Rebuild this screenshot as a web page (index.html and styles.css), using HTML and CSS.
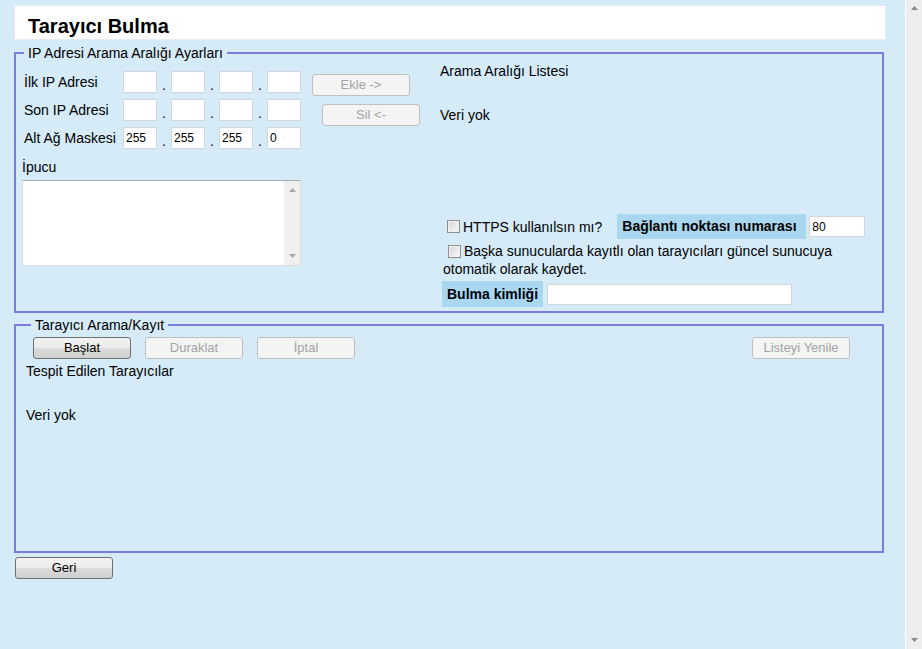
FILE: index.html
```html
<!DOCTYPE html>
<html lang="tr">
<head>
<meta charset="utf-8">
<title>Tarayıcı Bulma</title>
<link rel="stylesheet" href="styles.css">
</head>
<body>
<div class="page">
  <main class="main">
    <div class="header"><h1>Tarayıcı Bulma</h1></div>

    <fieldset class="box box-range">
      <legend>IP Adresi Arama Aralığı Ayarları</legend>
      <div class="range">
        <div class="col-left">
          <div class="ip-row">
            <span class="ip-label">İlk IP Adresi</span>
            <input class="oct" type="text"><span class="dot">.</span>
            <input class="oct" type="text"><span class="dot">.</span>
            <input class="oct" type="text"><span class="dot">.</span>
            <input class="oct" type="text">
          </div>
          <div class="ip-row">
            <span class="ip-label">Son IP Adresi</span>
            <input class="oct" type="text"><span class="dot">.</span>
            <input class="oct" type="text"><span class="dot">.</span>
            <input class="oct" type="text"><span class="dot">.</span>
            <input class="oct" type="text">
          </div>
          <div class="ip-row">
            <span class="ip-label">Alt Ağ Maskesi</span>
            <input class="oct" type="text" value="255"><span class="dot">.</span>
            <input class="oct" type="text" value="255"><span class="dot">.</span>
            <input class="oct" type="text" value="255"><span class="dot">.</span>
            <input class="oct" type="text" value="0">
          </div>
          <div class="hint-label">İpucu</div>
          <div class="hint-box">
            <textarea class="hint-text"></textarea>
            <div class="tsb">
              <svg width="7" height="4" viewBox="0 0 7 4"><path d="M0 4 L3.5 0 L7 4 Z" fill="#a8a8a8"/></svg>
              <svg width="7" height="4" viewBox="0 0 7 4"><path d="M0 0 L7 0 L3.5 4 Z" fill="#a8a8a8"/></svg>
            </div>
          </div>
        </div>

        <div class="col-mid">
          <button class="btn btn-ekle" disabled>Ekle -&gt;</button>
          <button class="btn btn-sil" disabled>Sil &lt;-</button>
        </div>

        <div class="col-right">
          <div class="list-title">Arama Aralığı Listesi</div>
          <div class="list-empty">Veri yok</div>
          <div class="opts">
            <div class="opt-row">
              <input type="checkbox" class="cb">
              <span>HTTPS kullanılsın mı?</span>
              <span class="tag tag-port">Bağlantı noktası numarası</span>
              <input class="port" type="text" value="80">
            </div>
            <p class="opt-p"><input type="checkbox" class="cb cb2">Başka sunucularda kayıtlı olan tarayıcıları güncel sunucuya otomatik olarak kaydet.</p>
            <div class="opt-row id-row">
              <span class="tag tag-id">Bulma kimliği</span>
              <input class="idinput" type="text">
            </div>
          </div>
        </div>
      </div>
    </fieldset>

    <fieldset class="box box-scan">
      <legend>Tarayıcı Arama/Kayıt</legend>
      <div class="scan">
        <div class="scan-btns">
          <button class="btn btn-on">Başlat</button>
          <button class="btn" disabled>Duraklat</button>
          <button class="btn" disabled>İptal</button>
          <button class="btn btn-refresh" disabled>Listeyi Yenile</button>
        </div>
        <div class="scan-title">Tespit Edilen Tarayıcılar</div>
        <div class="scan-empty">Veri yok</div>
      </div>
    </fieldset>

    <button class="btn btn-on btn-back">Geri</button>
  </main>
  <div class="vscroll">
    <svg width="7" height="4" viewBox="0 0 7 4"><path d="M0 4 L3.5 0 L7 4 Z" fill="#8a8a8a"/></svg>
    <svg width="7" height="4" viewBox="0 0 7 4"><path d="M0 0 L7 0 L3.5 4 Z" fill="#8a8a8a"/></svg>
  </div>
</div>
</body>
</html>
```

FILE: styles.css
```css
html, body {
  margin: 0;
  padding: 0;
}

body {
  font-family: "Liberation Sans", Arial, sans-serif;
  font-size: 14px;
  line-height: 16px;
  color: #000;
  background: #d5ebf8;
}

.page {
  display: flex;
  height: 649px;
  overflow: hidden;
}

.main {
  width: 905px;
  flex: none;
  box-sizing: border-box;
  padding: 5px 0 0 14px;
}

.vscroll {
  width: 17px;
  flex: none;
  box-sizing: border-box;
  background: #eeeeee;
  border-left: 1px solid #ffffff;
  display: flex;
  flex-direction: column;
  justify-content: space-between;
  align-items: center;
  padding: 6px 0 7px;
}

.vscroll svg {
  display: block;
}

/* header */
.header {
  width: 872px;
  height: 35px;
  box-sizing: border-box;
  background: #ffffff;
  border: 1px solid #e3edf3;
  padding: 8px 0 0 13px;
}

.header h1 {
  margin: 0;
  font-size: 20px;
  line-height: 24px;
  font-weight: bold;
}

/* fieldsets */
.box {
  width: 870px;
  box-sizing: border-box;
  border: 2px solid #7b7be3;
  margin: 5px 0 0;
  padding: 0;
  min-width: 0;
}

.box legend {
  padding: 0 4px;
  margin-left: 8px;
  font-size: 14px;
  line-height: 16px;
}

.box-scan {
  margin-top: 4px;
}

.box-scan legend {
  margin-left: 15px;
}

/* inputs */
input[type="text"] {
  box-sizing: border-box;
  height: 22px;
  margin: 0;
  padding: 0 2px;
  border: 1px solid #d3d6d8;
  background: #ffffff;
  font-family: "Liberation Sans", Arial, sans-serif;
  font-size: 12px;
  color: #000;
  outline: none;
}

/* range section */
.range {
  display: flex;
  align-items: flex-start;
  padding-bottom: 4px;
}

.col-left {
  width: 285px;
  flex: none;
  box-sizing: border-box;
  padding: 10px 0 0 6px;
}

.ip-row {
  display: flex;
  align-items: center;
  height: 22px;
  margin: 0 0 6px 2px;
}

.ip-label {
  width: 99px;
  flex: none;
  white-space: nowrap;
}

.oct {
  width: 34px;
  flex: none;
}

.dot {
  width: 14px;
  flex: none;
  text-align: center;
  align-self: flex-end;
}

.hint-label {
  margin-top: 10px;
}

.hint-box {
  display: flex;
  width: 279px;
  height: 86px;
  margin-top: 5px;
  box-sizing: border-box;
  background: #ffffff;
  border: 1px solid #dcdcdc;
  border-top-color: #a9a9a9;
}

.hint-text {
  flex: 1;
  min-width: 0;
  border: 0;
  margin: 0;
  padding: 2px;
  resize: none;
  outline: none;
  background: #ffffff;
  font-family: "Liberation Sans", Arial, sans-serif;
  font-size: 12px;
}

.tsb {
  width: 16px;
  flex: none;
  background: #f0f0f0;
  display: flex;
  flex-direction: column;
  justify-content: space-between;
  align-items: center;
  padding: 7px 0 7px;
  box-sizing: border-box;
}

.tsb svg {
  display: block;
}

.col-mid {
  width: 108px;
  flex: none;
  margin-left: 11px;
  display: flex;
  flex-direction: column;
  align-items: flex-start;
}

.btn {
  width: 98px;
  height: 22px;
  box-sizing: border-box;
  margin: 0;
  padding: 0;
  border-radius: 3px;
  font-family: "Liberation Sans", Arial, sans-serif;
  font-size: 13px;
  line-height: 20px;
  border: 1px solid #bfbfbf;
  background: #f4f4f4;
  color: #a3a3a3;
}

.btn-on {
  border-color: #707070;
  color: #000;
  background: linear-gradient(#f2f2f2 0%, #ebebeb 50%, #dddddd 50%, #cfcfcf 100%);
}

.btn-ekle {
  margin-top: 13px;
}

.btn-sil {
  margin-top: 8px;
  margin-left: 10px;
}

.col-right {
  flex: 1;
  min-width: 0;
  margin-left: 20px;
  padding-top: 2px;
}

.list-empty {
  margin-top: 28px;
}

.opts {
  margin: 91px 0 0 3px;
}

.opt-row {
  display: flex;
  align-items: center;
  height: 25px;
}

.cb {
  -webkit-appearance: none;
  appearance: none;
  width: 13px;
  height: 13px;
  box-sizing: border-box;
  margin: 0 3px 0 4px;
  border: 1px solid #8e8f8f;
  background: linear-gradient(135deg, #d4d4d4 0%, #ececec 60%, #f6f6f6 100%);
  box-shadow: inset 0 0 0 1px #f2f2f2;
  flex: none;
}

.cb2 {
  margin: 0 3px 0 5px;
  vertical-align: -2px;
}

.tag {
  background: #a9d7ef;
  font-weight: bold;
  padding: 0 5px;
  white-space: nowrap;
  box-sizing: border-box;
}

.tag-port {
  width: 189px;
  margin-left: 15px;
  height: 25px;
  line-height: 25px;
}

.port {
  width: 56px;
  height: 21px !important;
  margin-left: 3px !important;
}

.opt-p {
  margin: 3px 0 0;
  line-height: 18px;
}

.id-row {
  height: 26px;
  margin-top: 3px;
}

.tag-id {
  width: 101px;
  height: 26px;
  line-height: 26px;
  margin-left: -1px;
}

.idinput {
  width: 245px;
  height: 21px !important;
  margin-left: 4px !important;
}

/* scan section */
.scan {
  min-height: 218px;
  box-sizing: border-box;
  padding-top: 4px;
}

.scan-btns {
  display: flex;
  gap: 14px;
  padding: 0 32px 0 17px;
}

.btn-refresh {
  margin-left: auto;
}

.scan-title {
  margin-top: 4px;
  padding-left: 10px;
}

.scan-empty {
  margin-top: 28px;
  padding-left: 10px;
}

.btn-back {
  display: block;
  margin: 4px 0 0 1px;
}
```
